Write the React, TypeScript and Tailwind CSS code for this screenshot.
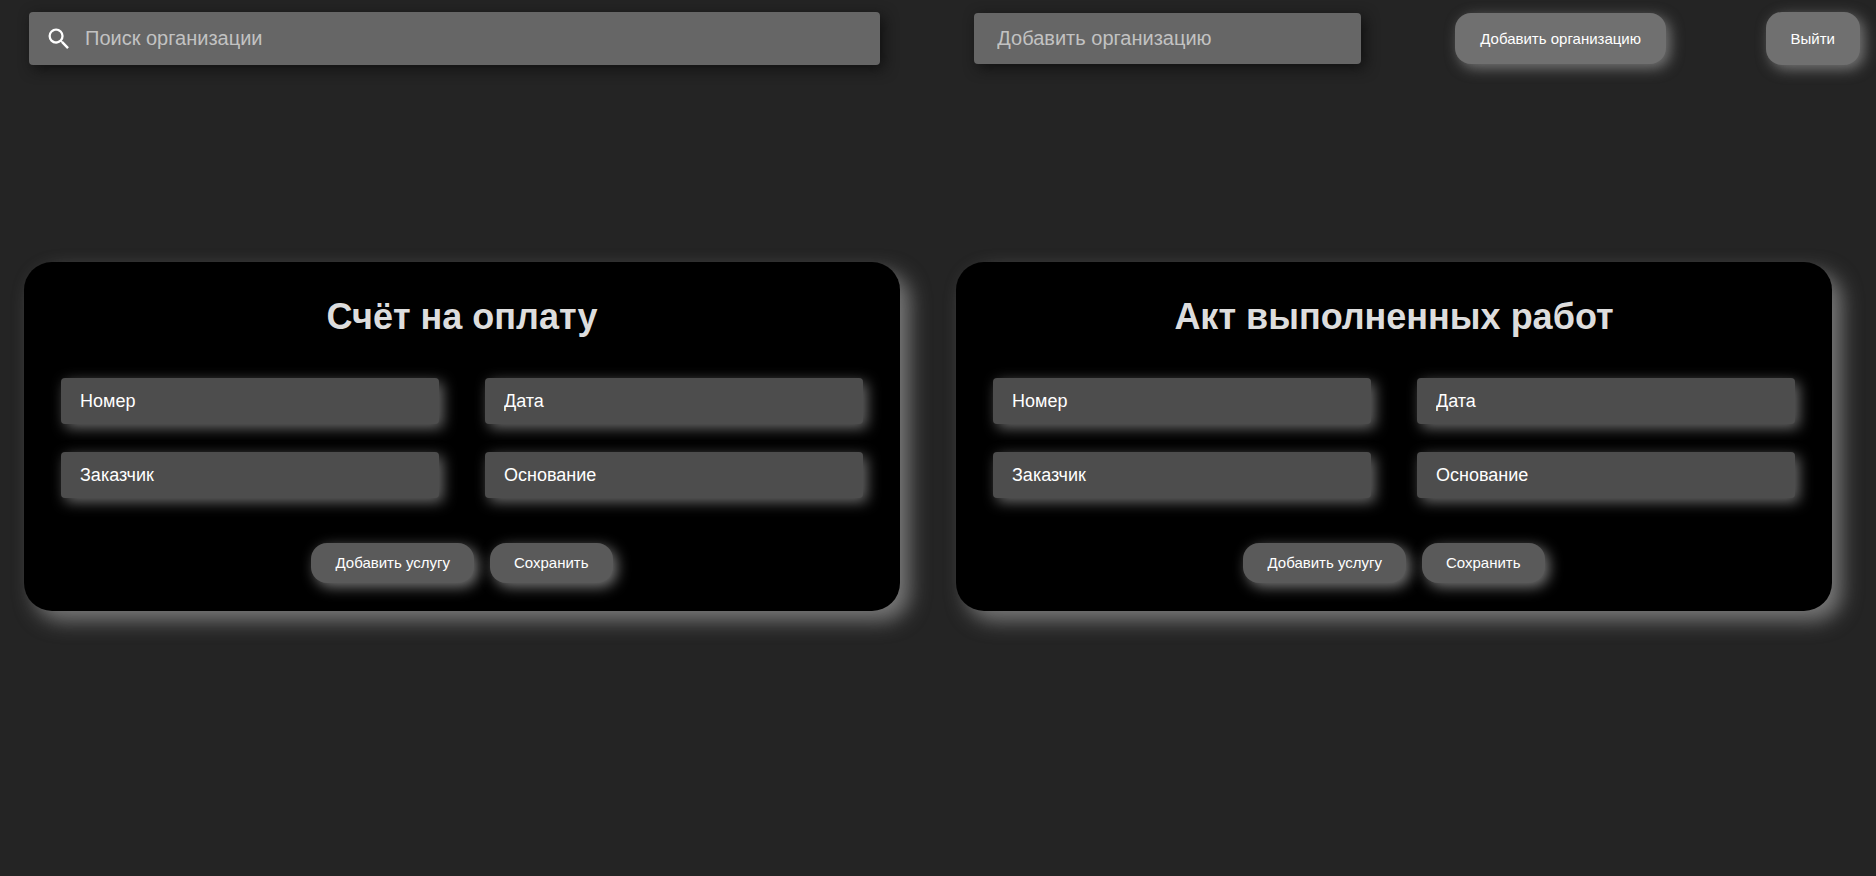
import React from 'react';
import { MdSearch } from 'react-icons/md';

interface DocumentCardProps {
    id: string;
    title: string;
}

const fields = [
    { name: 'number', label: 'Номер' },
    { name: 'date', label: 'Дата' },
    { name: 'customer', label: 'Заказчик' },
    { name: 'basis', label: 'Основание' },
];

const headerField = 'flex min-w-0 items-center rounded bg-[#666666] shadow-[4px_4px_14px_#111111]';
const headerInput = 'h-full w-full min-w-0 text-xl text-white outline-none placeholder:text-[#c2c2c2]';
const headerButton = 'rounded-2xl bg-[#707070] px-[25px] pt-px text-[15px] text-white whitespace-nowrap shadow-[4px_4px_14px_#777777]';
const cardButton = 'h-10 rounded-2xl bg-[#5a5a5a] px-6 text-[15px] text-white shadow-[4px_4px_14px_#777777]';

const DocumentCard = ({ id, title }: DocumentCardProps) => (
    <form className="flex-1 rounded-[28px] bg-black px-[37px] pt-8 pb-7 shadow-[10px_10px_20px_#777777]">
        <h2 className="mb-[38px] text-center text-4xl leading-[46px] font-bold text-[#dddddd]">{title}</h2>

        <div className="grid grid-cols-2 gap-x-[46px] gap-y-7">
            {fields.map((field) => (
                <input
                    key={field.name}
                    id={`${id}-${field.name}`}
                    name={field.name}
                    type="text"
                    aria-label={field.label}
                    placeholder={field.label}
                    className="h-[46px] w-full min-w-0 rounded bg-[#4d4d4d] px-[19px] text-lg text-white outline-none placeholder:text-white shadow-[4px_4px_14px_#6a6a6a]"
                />
            ))}
        </div>

        <div className="mt-[45px] flex justify-center gap-4">
            <button type="button" className={cardButton}>Добавить услугу</button>
            <button type="button" className={cardButton}>Сохранить</button>
        </div>
    </form>
);

export default function App() {
    return (
        <div className="flex min-h-screen flex-col bg-[#242424] font-['Liberation_Sans',Arial,sans-serif]">
            <header className="flex items-center gap-[94px] pt-3 pr-4 pl-[29px]">
                <div className="flex min-w-0 flex-[11]">
                    <label className={`${headerField} h-[53px] flex-1 gap-3 px-4`}>
                        <MdSearch size={28} className="shrink-0 text-white" />
                        <input
                            type="search"
                            aria-label="Поиск организации"
                            placeholder="Поиск организации"
                            className={`${headerInput} pb-px`}
                        />
                    </label>
                </div>
                <div className="flex min-w-0 flex-[5]">
                    <label className={`${headerField} h-[51px] flex-1 px-[23px]`}>
                        <input
                            type="text"
                            aria-label="Добавить организацию"
                            placeholder="Добавить организацию"
                            className={headerInput}
                        />
                    </label>
                </div>
                <button type="button" className={`${headerButton} h-[51px]`}>Добавить организацию</button>
                <nav className="flex w-[100px] justify-end">
                    <button type="button" className={`${headerButton} h-[53px]`}>Выйти</button>
                </nav>
            </header>

            <main className="mt-[197px] flex items-start gap-14 pr-11 pl-6">
                <DocumentCard id="invoice" title="Счёт на оплату" />
                <DocumentCard id="act" title="Акт выполненных работ" />
            </main>
        </div>
    );
}
